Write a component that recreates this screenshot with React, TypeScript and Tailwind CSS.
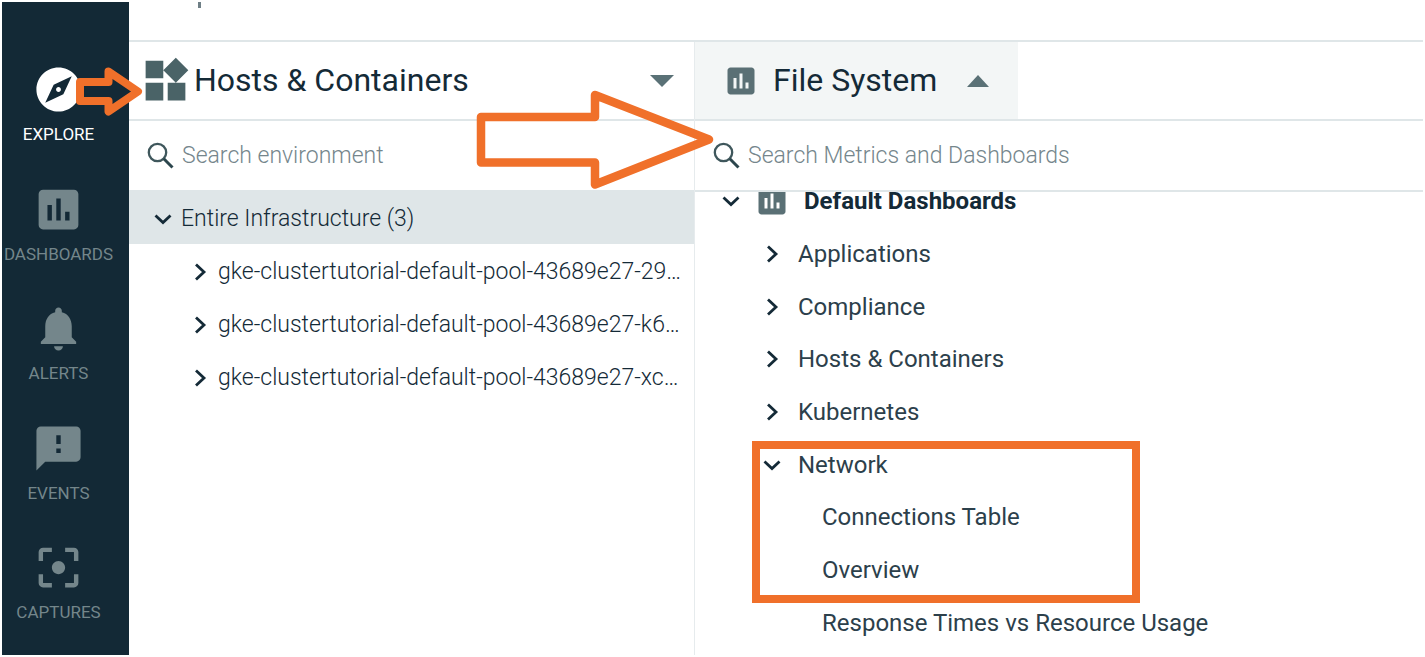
import React from "react";
import {
  MdAssessment,
  MdExplore,
  MdFeedback,
  MdFilterCenterFocus,
  MdNotifications,
  MdWidgets,
} from "react-icons/md";

const navItems = [
  { label: "EXPLORE", Icon: MdExplore, active: true },
  { label: "DASHBOARDS", Icon: MdAssessment, active: false },
  { label: "ALERTS", Icon: MdNotifications, active: false },
  { label: "EVENTS", Icon: MdFeedback, active: false },
  { label: "CAPTURES", Icon: MdFilterCenterFocus, active: false },
];

const hosts = [
  "gke-clustertutorial-default-pool-43689e27-29…",
  "gke-clustertutorial-default-pool-43689e27-k6…",
  "gke-clustertutorial-default-pool-43689e27-xc…",
];

const groups = ["Applications", "Compliance", "Hosts & Containers", "Kubernetes"];

const networkViews = ["Connections Table", "Overview", "Response Times vs Resource Usage"];

function ChevronDown() {
  return (
    <svg className="h-5 w-5 shrink-0" viewBox="0 0 20 20" fill="none" aria-hidden="true">
      <path d="M2.5 6.5 10 13.5 17.5 6.5" stroke="#142a37" strokeWidth="2.8" />
    </svg>
  );
}

function ChevronRight() {
  return (
    <svg className="h-5 w-5 shrink-0" viewBox="0 0 20 20" fill="none" aria-hidden="true">
      <path d="M6 2.5 14 10 6 17.5" stroke="#142a37" strokeWidth="2.8" />
    </svg>
  );
}

function SearchIcon() {
  return (
    <svg className="h-7 w-7 shrink-0" viewBox="0 0 28 28" fill="none" aria-hidden="true">
      <circle cx="10.5" cy="10.5" r="8.7" stroke="#3f575c" strokeWidth="2.3" />
      <path d="M16.8 16.8 25.5 25.5" stroke="#2c464d" strokeWidth="3" />
    </svg>
  );
}

function SearchBox({ id, label }: { id: string; label: string }) {
  return (
    <div className="flex h-[69px] items-center gap-[7px] pl-[18px]">
      <label htmlFor={id} aria-label={label}>
        <SearchIcon />
      </label>
      <input
        id={id}
        type="search"
        placeholder={label}
        className="min-w-0 flex-1 bg-transparent pt-0.5 text-[23px] font-light text-[#142a37] outline-none placeholder:text-[#75868c]"
      />
    </div>
  );
}

export default function App() {
  return (
    <div className="relative flex min-h-screen overflow-hidden bg-white p-0.5 font-['Roboto',sans-serif] text-[#142a37]">
      <nav className="flex w-[127px] shrink-0 flex-col bg-[#132936] pb-[31px] pt-[61px]">
        <ul className="flex flex-1 flex-col justify-between">
          {navItems.map(({ label, Icon, active }) => (
            <li key={label}>
              <a
                href="#"
                className={
                  active
                    ? "flex flex-col items-center pr-3.5 text-white"
                    : "flex flex-col items-center pr-3.5 text-[#74868b]"
                }
              >
                <Icon className="h-[53px] w-[53px]" />
                <span className="mt-1.5 text-[17px] leading-6">{label}</span>
              </a>
            </li>
          ))}
        </ul>
      </nav>

      <main className="flex min-w-0 flex-1 flex-col">
        <div className="h-[40px] border-b-2 border-[#dfe6e8] pl-[69px]">
          <div className="h-1.5 w-[3px] bg-[#6f7f86]" />
        </div>

        <div className="grid flex-1 grid-cols-[566fr_728fr]">
          <section className="min-w-0 border-r border-[#e6ebed]">
            <button
              type="button"
              className="flex h-[79px] w-full items-center border-b-2 border-[#dfe6e8] pl-[10px] pr-5 text-left"
            >
              <MdWidgets className="h-[53px] w-[53px] text-[#4a6367]" />
              <span className="flex-1 pb-0.5 pl-0.5 text-[32px] leading-10">Hosts &amp; Containers</span>
              <svg className="h-3 w-6" viewBox="0 0 24 12" aria-hidden="true">
                <path d="M0 0h24L12 12z" fill="#5a7176" />
              </svg>
            </button>
            <SearchBox id="environment" label="Search environment" />
            <ul className="text-[23px]">
              <li>
                <button
                  type="button"
                  className="flex h-[54px] w-full items-center gap-2 bg-[#dfe6e8] pl-6 pt-1 text-left font-light"
                >
                  <ChevronDown />
                  Entire Infrastructure (3)
                </button>
                <ul>
                  {hosts.map((host) => (
                    <li key={host}>
                      <button
                        type="button"
                        className="flex h-[53px] w-full items-center gap-2 whitespace-nowrap pl-[61px] pt-[3px] text-left font-light"
                      >
                        <ChevronRight />
                        {host}
                      </button>
                    </li>
                  ))}
                </ul>
              </li>
            </ul>
          </section>

          <section className="min-w-0">
            <div className="h-[79px] border-b-2 border-[#dfe6e8]">
              <button type="button" className="flex h-full w-[323px] items-center bg-[#f3f6f6] pl-7">
                <MdAssessment className="h-9 w-9 text-[#5a7075]" />
                <span className="pb-0.5 pl-[14px] text-[32px] leading-10">File System</span>
                <svg className="ml-[30px] h-3 w-[22px]" viewBox="0 0 22 12" aria-hidden="true">
                  <path d="M0 12h22L11 0z" fill="#5a7176" />
                </svg>
              </button>
            </div>
            <div className="border-b-2 border-[#dfe6e8]">
              <SearchBox id="metrics" label="Search Metrics and Dashboards" />
            </div>
            <div className="overflow-hidden">
              <div className="relative -mt-[17px] grid h-[474px] auto-rows-fr text-2xl text-[#2c404b]">
                <button type="button" className="flex items-center pl-[26px] text-left font-bold text-[#142a37]">
                  <ChevronDown />
                  <MdAssessment className="ml-[13px] h-9 w-9 text-[#5a7075]" />
                  <span className="pl-[14px]">Default Dashboards</span>
                </button>
                {groups.map((group) => (
                  <button key={group} type="button" className="flex items-center gap-4 pl-[67px] text-left">
                    <ChevronRight />
                    {group}
                  </button>
                ))}
                <button type="button" className="flex items-center gap-4 pl-[67px] text-left">
                  <ChevronDown />
                  Network
                </button>
                {networkViews.map((view) => (
                  <a key={view} href="#" className="flex items-center pl-[127px]">
                    {view}
                  </a>
                ))}
                <div className="pointer-events-none absolute left-[57px] top-[266px] h-[162px] w-[388px] border-8 border-[#f0702a]" />
              </div>
            </div>
          </section>
        </div>
      </main>

      <svg
        className="pointer-events-none absolute left-[70px] top-[60px] h-[140px] w-[650px]"
        viewBox="70 60 650 140"
        fill="none"
        stroke="#f0702a"
        strokeWidth="8.5"
        strokeLinejoin="round"
        aria-hidden="true"
      >
        <path d="M80 82H108.500V71.500L138 91.500 108.500 111.500V101H80Z" fill="#132936" strokeWidth="8" />
        <path d="M481 117H595V95L709 139.500 595 184.500V162.500H481Z" />
      </svg>
    </div>
  );
}
